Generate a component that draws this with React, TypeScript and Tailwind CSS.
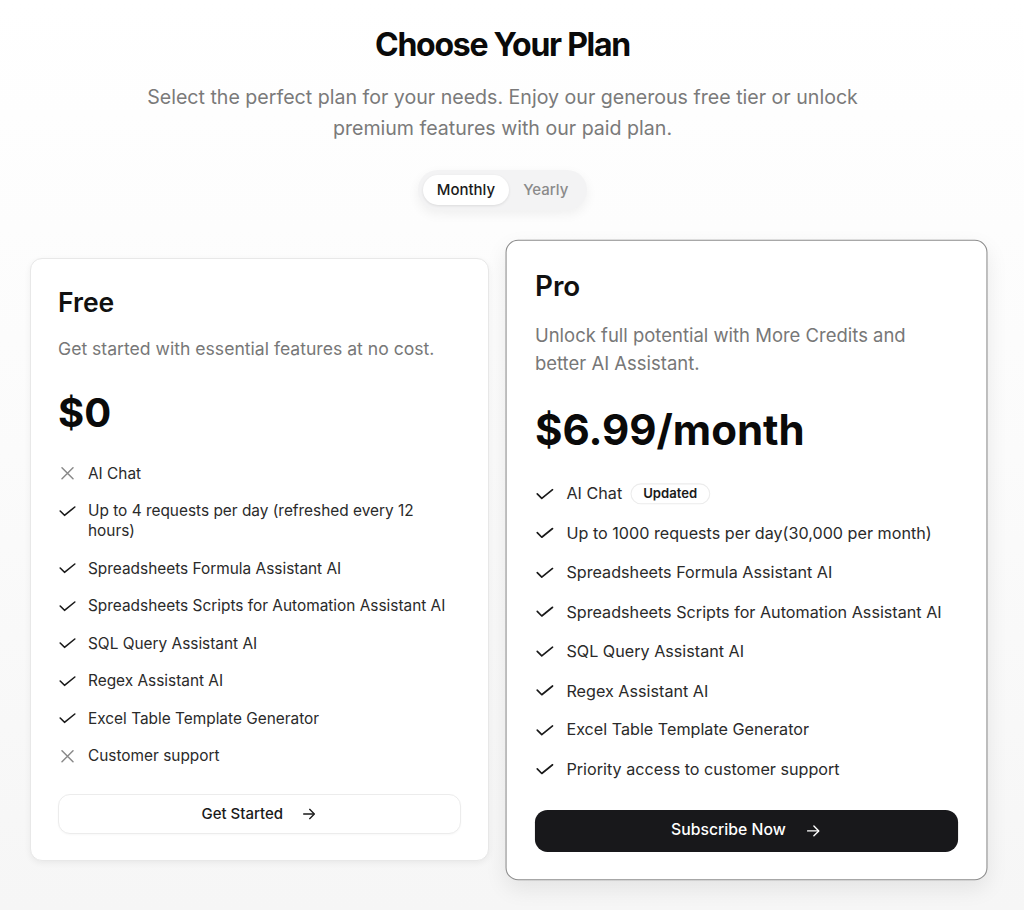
import React from "react";

const CheckIcon = () => (
  <svg width="17" height="11" viewBox="0 0 17 11" fill="none" className="shrink-0">
    <polyline points="1.2,5 5.5,9.3 15.8,1" stroke="#1a1a1a" strokeWidth="1.6" strokeLinecap="round" strokeLinejoin="round" />
  </svg>
);

const XIcon = () => (
  <svg width="17" height="13" viewBox="0 0 17 13" fill="none" className="shrink-0">
    <path d="M3 0.8 L14 11.8 M14 0.8 L3 11.8" stroke="#8a8a8a" strokeWidth="1.5" strokeLinecap="round" />
  </svg>
);

const ArrowIcon = ({ color }: { color: string }) => (
  <svg width="16" height="16" viewBox="0 0 24 24" fill="none" stroke={color} strokeWidth="2" strokeLinecap="round" strokeLinejoin="round">
    <path d="M4 12h15" />
    <path d="m13 5 7 7-7 7" />
  </svg>
);

type Feature = { text: string; ok: boolean; badge?: string };

const freeFeatures: Feature[] = [
  { text: "AI Chat", ok: false },
  { text: "Up to 4 requests per day (refreshed every 12 hours)", ok: true },
  { text: "Spreadsheets Formula Assistant AI", ok: true },
  { text: "Spreadsheets Scripts for Automation Assistant AI", ok: true },
  { text: "SQL Query Assistant AI", ok: true },
  { text: "Regex Assistant AI", ok: true },
  { text: "Excel Table Template Generator", ok: true },
  { text: "Customer support", ok: false },
];

const proFeatures: Feature[] = [
  { text: "AI Chat", ok: true, badge: "Updated" },
  { text: "Up to 1000 requests per day(30,000 per month)", ok: true },
  { text: "Spreadsheets Formula Assistant AI", ok: true },
  { text: "Spreadsheets Scripts for Automation Assistant AI", ok: true },
  { text: "SQL Query Assistant AI", ok: true },
  { text: "Regex Assistant AI", ok: true },
  { text: "Excel Table Template Generator", ok: true },
  { text: "Priority access to customer support", ok: true },
];

function FeatureList({ items }: { items: Feature[] }) {
  return (
    <ul className="mt-[27px] flex flex-col gap-[17.5px]">
      {items.map((f, i) => (
        <li key={i} className="flex items-start gap-[12px] pl-[1px]">
          <span className="flex h-[20px] w-[17px] items-center justify-center shrink-0">
            {f.ok ? <CheckIcon /> : <XIcon />}
          </span>
          <span className="flex max-w-[368px] items-center text-[15.4px] leading-[20px] text-[#2a2a2a]">
            {f.text}
            {f.badge && (
              <span className="ml-[8px] rounded-full border border-[#ececec] px-[11px] py-[1px] text-[12.5px] font-semibold leading-[16px] text-[#1a1a1a]">
                {f.badge}
              </span>
            )}
          </span>
        </li>
      ))}
    </ul>
  );
}

export default function App() {
  return (
    <div
      className="min-h-[910px] w-full bg-gradient-to-b from-white via-[#fbfbfb] to-[#f6f6f6]"
      style={{ fontFamily: "Inter, 'Noto Sans', sans-serif" }}
    >
      <div className="w-[1005px] px-[30px] pt-[25px] pb-[30px]">
        <div className="flex flex-col items-center">
          <h1 className="text-[32px] font-bold leading-[40px] tracking-[-0.04em] text-[#0a0a0a]">
            Choose Your Plan
          </h1>
          <p className="mt-[17px] max-w-[745px] text-center text-[19.6px] leading-[31px] text-[#7a7a7a]">
            Select the perfect plan for your needs. Enjoy our generous free tier or unlock premium features with our paid plan.
          </p>
          <div className="mt-[26px] flex items-center rounded-full bg-[#f3f3f4] p-[5px] shadow-[0_4px_12px_rgba(0,0,0,0.06)]">
            <button className="h-[30px] rounded-full bg-white px-[14px] text-[15px] font-medium text-[#1a1a1a] shadow-[0_1px_3px_rgba(0,0,0,0.1)]">
              Monthly
            </button>
            <button className="h-[30px] rounded-full px-[14px] text-[15px] font-medium text-[#8a8a8a]">
              Yearly
            </button>
          </div>
        </div>

        <div className="mt-[45px] grid grid-cols-2 items-center gap-[28px]">
          {/* Free card */}
          <div className="flex flex-col rounded-xl border border-[#e8e8e8] bg-white px-[27px] pt-[27px] pb-[26px] shadow-[0_2px_6px_rgba(0,0,0,0.06)]">
            <h2 className="text-[26.5px] font-semibold leading-[32px] text-[#111]">Free</h2>
            <p className="mt-[18px] text-[17.6px] leading-[26.5px] text-[#777]">
              Get started with essential features at no cost.
            </p>
            <div className="mt-[26px] text-[40px] font-bold leading-[48px] text-[#0a0a0a]">$0</div>
            <FeatureList items={freeFeatures} />
            <button className="mt-[28px] flex h-[40px] w-full items-center justify-center gap-[18px] rounded-xl border border-[#ececec] bg-white text-[15px] font-medium text-[#1a1a1a] shadow-[0_1px_2px_rgba(0,0,0,0.03)]">
              Get Started
              <ArrowIcon color="#1a1a1a" />
            </button>
          </div>

          {/* Pro card */}
          <div className="flex scale-105 flex-col rounded-xl border border-[#8c8c8c] bg-white px-[27px] pt-[27px] pb-[26px] shadow-[0_8px_20px_rgba(0,0,0,0.08)]">
            <h2 className="text-[26.5px] font-semibold leading-[32px] text-[#111]">Pro</h2>
            <p className="mt-[18px] max-w-[380px] text-[17.6px] leading-[26.5px] text-[#777]">
              Unlock full potential with More Credits and better AI Assistant.
            </p>
            <div className="mt-[26px] text-[40px] font-bold leading-[48px] text-[#0a0a0a]">$6.99/month</div>
            <FeatureList items={proFeatures} />
            <button className="mt-[28px] flex h-[40px] w-full items-center justify-center gap-[18px] rounded-xl bg-[#18181b] text-[15px] font-medium text-white">
              Subscribe Now
              <ArrowIcon color="#ffffff" />
            </button>
          </div>
        </div>
      </div>
    </div>
  );
}
